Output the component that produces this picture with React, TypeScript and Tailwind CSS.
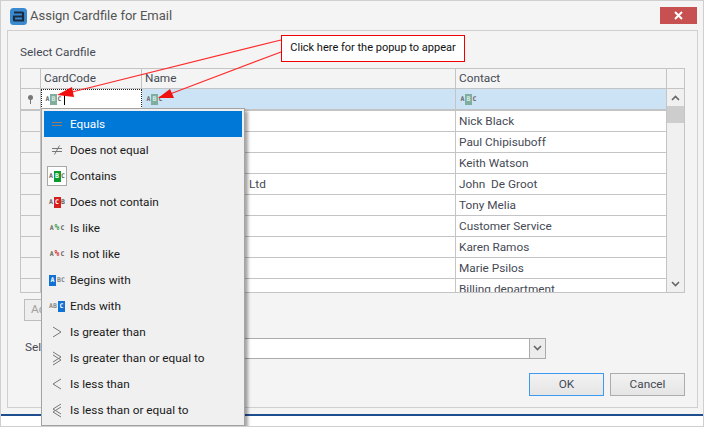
import React from 'react';

const font = "font-['Roboto','Open_Sans',sans-serif]";

const contacts = [
  'Nick Black',
  'Paul Chipisuboff',
  'Keith Watson',
  'John  De Groot',
  'Tony Melia',
  'Customer Service',
  'Karen Ramos',
  'Marie Psilos',
  'Billing department',
];

const glyph = "inline-flex items-center font-['DejaVu_Sans_Mono',monospace] text-[6.500px] font-bold leading-none text-[#666]";

// tiny "ABC" glyph used by the filter row and the operator menu
const Abc: React.FC<{ mid: string; tone?: string; last?: string }> = ({ mid, tone = 'bg-[#7fae9e] text-[#d8ebe4]', last = 'C' }) => (
  <span className={glyph}>
    <span className="w-[5px] text-center">A</span>
    <span className={`flex h-[11px] w-[7px] items-center justify-center ${tone}`}>{mid}</span>
    <span className="w-[5px] text-center">{last}</span>
  </span>
);

const EqualsIcon = ({ color }: { color: string }) => (
  <svg width="12" height="8" viewBox="0 0 12 8" fill="none" stroke={color}>
    <path d="M1 2.5h10M1 5.5h10" />
  </svg>
);

const Chevrons: React.FC<{ d: string }> = ({ d }) => (
  <svg width="12" height="16" viewBox="0 0 12 16" fill="none" stroke="#777">
    <path d={d} />
  </svg>
);

const menu: { label: string; icon: React.ReactNode }[] = [
  { label: 'Equals', icon: <EqualsIcon color="#a5795c" /> },
  {
    label: 'Does not equal',
    icon: (
      <svg width="12" height="10" viewBox="0 0 12 10" fill="none" stroke="#777">
        <path d="M1 3.5h10M1 6.5h10M8.5 0.5 3.500 9.5" />
      </svg>
    ),
  },
  {
    label: 'Contains',
    icon: (
      <span className="flex h-5 w-5 items-center justify-center border border-[#a8a8a8] bg-white">
        <Abc mid="B" tone="bg-[#0b9a2e] text-white" />
      </span>
    ),
  },
  { label: 'Does not contain', icon: <Abc mid="C" last="B" tone="bg-[#d81f1f] text-white" /> },
  {
    label: 'Is like',
    icon: (
      <span className={glyph}>
        A<span className="px-px text-[8px] text-[#2e9e46]">%</span>C
      </span>
    ),
  },
  {
    label: 'Is not like',
    icon: (
      <span className={glyph}>
        A<span className="px-px text-[8px] text-[#d81f1f]">%</span>C
      </span>
    ),
  },
  {
    label: 'Begins with',
    icon: (
      <span className={glyph}>
        <span className="flex h-[11px] w-[7px] items-center justify-center bg-[#1272d3] text-white">A</span>
        <span className="ml-[1px] text-[#888]">BC</span>
      </span>
    ),
  },
  {
    label: 'Ends with',
    icon: (
      <span className={glyph}>
        <span className="mr-[1px] text-[#888]">AB</span>
        <span className="flex h-[11px] w-[7px] items-center justify-center bg-[#1272d3] text-white">C</span>
      </span>
    ),
  },
  { label: 'Is greater than', icon: <Chevrons d="M2 3l8 5-8 5" /> },
  { label: 'Is greater than or equal to', icon: <Chevrons d="M2 2l8 5-8 5M2 5l8 5-8 5" /> },
  { label: 'Is less than', icon: <Chevrons d="M10 3 2 8l8 5" /> },
  { label: 'Is less than or equal to', icon: <Chevrons d="M10 2 2 7l8 5M10 5 2 10l8 5" /> },
];

const App: React.FC = () => {
  return (
    <div className={`relative flex h-[427px] w-[704px] flex-col overflow-hidden border border-[#cfcfcf] bg-[#f4f4f4] text-[11.800px] text-[#454a55] ${font}`}>
      {/* title bar */}
      <div className="flex h-[29px] shrink-0 items-center pl-[9px] pr-[6px]">
        <svg width="17" height="17" viewBox="0 0 17 17" className="mt-[1px]">
          <rect width="17" height="17" rx="3.500" fill="#3a8ad0" />
          <path d="M4 4.500h8.500a.5.500 0 0 1 .5.500v7.500H4.500a.5.500 0 0 1-.5-.5V8.500h9" fill="none" stroke="#1b2c40" strokeWidth="2.200" />
        </svg>
        <span className="ml-[3px] text-[13px] leading-none text-[#555]">Assign Cardfile for Email</span>
        <button className="ml-auto flex h-[17px] w-[37px] items-center justify-center bg-[#c75050]">
          <svg width="9" height="9" viewBox="0 0 9 9" stroke="#fff" strokeWidth="2">
            <path d="M1 1l7 7M8 1 1 8" />
          </svg>
        </button>
      </div>

      {/* main panel */}
      <div className="ml-[6px] mr-[5px] flex h-[378px] shrink-0 flex-col border border-[#cfcfcf] bg-[#f4f4f4] px-3">
        <div className="mt-[13px] h-[24px] leading-4">Select Cardfile</div>

        {/* grid */}
        <div className="flex h-[225px] shrink-0 flex-col overflow-hidden border border-[#c4c4c4]">
          <div className="flex h-5 shrink-0 border-b border-[#c4c4c4] leading-[19px]">
            <div className="w-5 border-r border-[#c4c4c4]" />
            <div className="w-[101px] border-r border-[#c4c4c4] pl-[3px]">CardCode</div>
            <div className="w-[314px] border-r border-[#c4c4c4] pl-[3px]">Name</div>
            <div className="w-[211px] border-r border-[#c4c4c4] pl-[3px]">Contact</div>
            <div className="flex-1" />
          </div>
          <div className="flex min-h-0 flex-1">
            <div className="w-[646px] shrink-0">
              {/* filter row */}
              <div className="flex h-[22px] border-b-2 border-[#c4c4c4]">
                <div className="flex w-5 items-center justify-center border-r border-[#c4c4c4]">
                  <svg width="7" height="9" viewBox="0 0 7 9">
                    <circle cx="3.500" cy="2.500" r="2.500" fill="#777" />
                    <path d="M3.500 4v5" stroke="#777" />
                  </svg>
                </div>
                <div className="flex w-[101px] items-center border border-dotted border-[#222] bg-white pl-[3px]">
                  <Abc mid="B" />
                  <span className="ml-[2px] h-[11px] w-px bg-black" />
                </div>
                <div className="flex w-[314px] items-center border-r border-[#c4c4c4] bg-[#cce2f5] pl-[4px]">
                  <Abc mid="B" />
                </div>
                <div className="flex w-[211px] items-center border-r border-[#c4c4c4] bg-[#cce2f5] pl-[4px]">
                  <Abc mid="B" />
                </div>
              </div>
              {contacts.map((contact, i) => (
                <div key={contact} className="flex h-[21px] border-b border-[#c4c4c4] leading-[21px]">
                  <div className="w-5 border-r border-[#c4c4c4]" />
                  <div className="w-[101px] border-r border-[#c4c4c4] bg-white" />
                  <div className="w-[314px] border-r border-[#c4c4c4] bg-white pl-[107px]">{i === 3 ? 'Ltd' : ''}</div>
                  <div className="w-[211px] whitespace-pre border-r border-[#c4c4c4] bg-white pl-[3px]">{contact}</div>
                </div>
              ))}
            </div>
            {/* scrollbar */}
            <div className="flex flex-1 flex-col items-center bg-[#f0f0f0]">
              <div className="flex h-[17px] w-full shrink-0 items-center justify-center">
                <svg width="9" height="6" viewBox="0 0 9 6" fill="none" stroke="#666" strokeWidth="1.600">
                  <path d="M1 5l3.500-3.500L8 5" />
                </svg>
              </div>
              <div className="h-[17px] w-full shrink-0 bg-[#cdcdcd]" />
              <div className="mt-auto flex h-[17px] w-full shrink-0 items-center justify-center">
                <svg width="9" height="6" viewBox="0 0 9 6" fill="none" stroke="#666" strokeWidth="1.600">
                  <path d="M1 1l3.500 3.500L8 1" />
                </svg>
              </div>
            </div>
          </div>
        </div>

        <div className="mt-[6px] ml-1 flex h-[22px] w-[120px] shrink-0 items-center border border-[#bdbdbd] bg-[#eeeeee] pl-[6px] text-[#a0a0a0]">
          Add
        </div>

        <div className="ml-[5px] mt-[17px] flex h-[20px] shrink-0 items-center">
          <span className="w-[75px]">Select Email</span>
          <div className="flex h-[21px] flex-1 justify-end border border-[#ababab] bg-white">
            <div className="flex w-4 items-center justify-center border-l border-[#ababab] bg-[#ececec]">
              <svg width="9" height="6" viewBox="0 0 9 6" fill="none" stroke="#666" strokeWidth="1.600">
                <path d="M1 1l3.500 3.500L8 1" />
              </svg>
            </div>
          </div>
          <div className="w-[139px]" />
        </div>

        <div className="mt-[15px] flex shrink-0 justify-end gap-[6px]">
          <button className="h-[23px] w-[75px] border border-[#3c9bf0] bg-gradient-to-b from-[#f2f2f2] to-[#e5e5e5]">OK</button>
          <button className="h-[23px] w-[75px] border border-[#acacac] bg-gradient-to-b from-[#f2f2f2] to-[#e5e5e5]">Cancel</button>
        </div>
      </div>

      {/* strip below the panel */}
      <div className="mt-[6px] h-[12px] border-t-2 border-[#1f4e8f] bg-white" />

      {/* annotation */}
      <div className="absolute left-[280px] top-[34px] flex h-[27px] w-[184px] items-center justify-center whitespace-nowrap border border-[#f00000] bg-white text-[11px] text-[#111]">
        Click here for the popup to appear
      </div>
      <svg className="pointer-events-none absolute left-0 top-0" width="704" height="427" viewBox="0 0 704 427">
        <g transform="translate(-1 -1)">
          <path d="M281 40 72 92" stroke="#ff2a2a" strokeWidth="1.200" />
          <path d="M57 95 72 87 74 97Z" fill="#f01010" />
          <path d="M281 52 170 94" stroke="#ff2a2a" strokeWidth="1.200" />
          <path d="M158 98 170 89 174 98Z" fill="#f01010" />
        </g>
      </svg>

      {/* operator popup */}
      <div className="absolute left-[40px] top-[107px] w-[204px] border border-[#a3a3a3] bg-[#f0f0f0] px-[2px] py-[2px] shadow-[3px_3px_3px_rgba(0,0,0,0.35)]">
        {menu.map((item, i) => (
          <div
            key={item.label}
            className={`flex h-[26px] items-center ${i === 0 ? 'bg-[#0078d7] text-white' : 'text-[#1a1a1a]'}`}
          >
            <span className="flex w-[26px] shrink-0 items-center justify-center">{item.icon}</span>
            <span className="pt-px">{item.label}</span>
          </div>
        ))}
      </div>
    </div>
  );
};

export default App;
